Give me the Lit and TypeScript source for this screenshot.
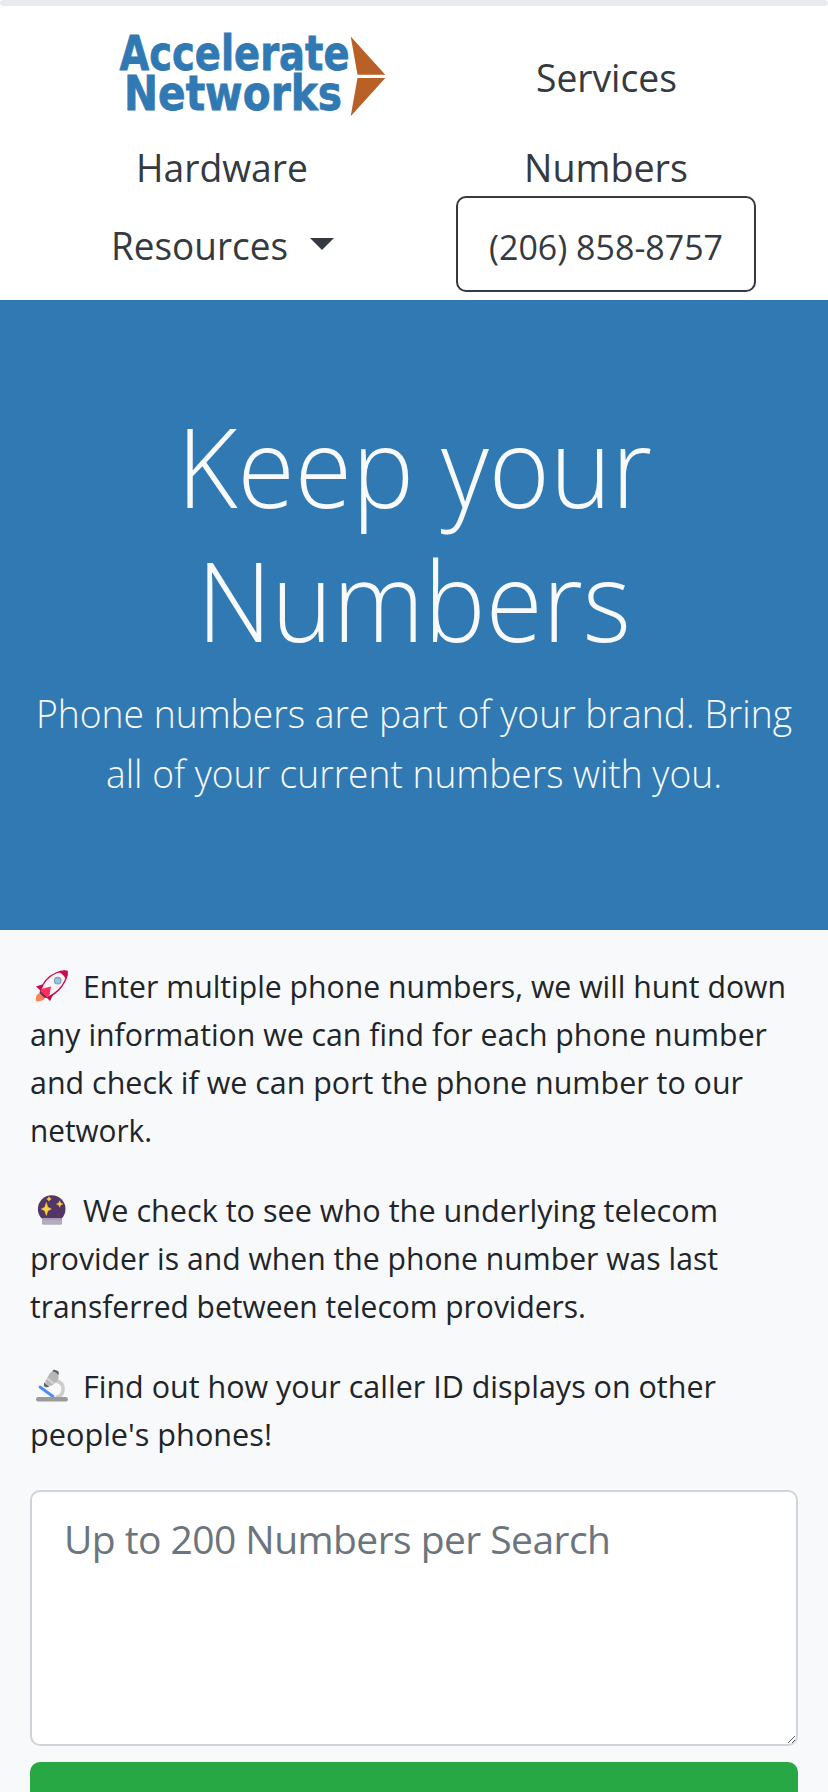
import { LitElement, html, css, svg } from "lit";
import { customElement, property, query } from "lit/decorators.js";

/** One line of text, condensed or widened so that it spans the given width. */
@customElement("fit-line")
export class FitLine extends LitElement {
  @property({ type: Number }) width = 0;
  @property() text = "";
  @query(".line") line!: HTMLElement;

  static styles = css`
    :host { display: inline-block; white-space: nowrap; text-align: left; }
    .line { display: inline-block; vertical-align: top; transform-origin: 0 0; }
  `;

  firstUpdated() {
    const natural = this.line.getBoundingClientRect().width;
    this.line.style.transform = `scaleX(${this.width / natural})`;
    this.style.width = `${this.width}px`;
  }

  render() {
    return html`<span class="line">${this.text}</span>`;
  }
}

const rocket = svg`
  <path d="M2 32 Q1 25 6 24 L11 29 Q8 33 2 32Z" fill="#ff8257"/>
  <path d="M2 17.5 L8 15.5 L13 17 L7 22Z" fill="#ca0b4a"/>
  <path d="M12 28 L18 21 L19 26 L16 32Z" fill="#ca0b4a"/>
  <path d="M6.5 22 Q10 9 22 4 Q29 1 33 2.5 Q34 8 28 17 Q22 25 13 28.5Z" fill="#f4f4f4" stroke="#ca0b4a" stroke-width="1.3"/>
  <path d="M25 3 Q30 .8 33.6 1.8 Q34.2 6 32 10.5 Q30 5.5 25 3Z" fill="#ca0b4a"/>
  <path d="M6 22 L13 28.5 L10.5 29 L5.5 24Z" fill="#533566"/>
  <path d="M7 20 L17 17.5 L15.5 26 L13 28 L6.5 22Z" fill="#f92f60"/>
  <circle cx="23.7" cy="11.7" r="3.2" fill="#83cbff" stroke="#9b9b9b" stroke-width="1.3"/>`;

const crystalBall = svg`
  <circle cx="17.7" cy="16" r="13.8" fill="#533566"/>
  <path d="M8 25 H28 V30.5 Q28 31.8 26.5 31.8 H9.5 Q8 31.8 8 30.5Z" fill="#b4acbc"/>
  <path d="M8 25 H28 V27 H8Z" fill="#a79cb0"/>
  <path d="M12.3 9.5 L13.8 14.2 L17.3 16 L13.8 17.8 L12.3 22.5 L10.8 17.8 L7.3 16 L10.8 14.2Z M25.7 7.8 L26.6 10.1 L28.9 11 L26.6 11.9 L25.7 14.2 L24.8 11.9 L22.5 11 L24.8 10.1Z M15 3.8 L15.8 5.2 L17.2 6 L15.8 6.8 L15 8.2 L14.2 6.8 L12.8 6 L14.2 5.2Z" fill="#fcd53f" stroke="#fcd53f" stroke-width=".5"/>`;

const microscope = svg`
  <path d="M22 12 Q30 13.5 29 21 Q28.5 27 22 28.5" fill="none" stroke="#cdcdcd" stroke-width="3.4"/>
  <path d="M6 18 L19 27.5" stroke="#4a8df8" stroke-width="2.8" stroke-linecap="round"/>
  <path d="M10 13.5 L15.5 17.5 L12.3 18.4 L9.8 16.9Z" fill="#636363"/>
  <path d="M19 1 Q21 0 24.5 2.5 Q25.5 4 24.2 6.5 L18 4Z" fill="#636363"/>
  <path d="M16 4 Q19 .8 23 4.5 Q25.5 7 24 11.5 L18 16.5 Q14 17.5 11.5 15 Q10.5 13 12 11Z" fill="#b7b7b7"/>
  <path d="M13 9.3 L19.8 14.7" stroke="#d6d6d6" stroke-width="2"/>
  <rect x="2" y="28" width="32" height="4.6" rx="2.3" fill="#9b9b9b"/>`;

type Line = [string, number];
const paragraphs: { icon: unknown; lines: Line[] }[] = [
  {
    icon: rocket,
    lines: [
      ["Enter multiple phone numbers, we will hunt down", 703],
      ["any information we can find for each phone number", 737],
      ["and check if we can port the phone number to our", 713],
      ["network.", 122],
    ],
  },
  {
    icon: crystalBall,
    lines: [
      ["We check to see who the underlying telecom", 635],
      ["provider is and when the phone number was last", 688],
      ["transferred between telecom providers.", 556],
    ],
  },
  {
    icon: microscope,
    lines: [
      ["Find out how your caller ID displays on other", 633],
      ["people's phones!", 242],
    ],
  },
];

@customElement("app-root")
export class AppRoot extends LitElement {
  static styles = css`
    :host {
      display: block;
      height: 1792px;
      overflow: hidden;
      background: #f8f9fa;
      color: #212529;
      font-family: "Open Sans", "Noto Sans", sans-serif;
    }
    * { box-sizing: border-box; }
    header { background: #fff; height: 300px; color: #343a40; }
    .progress { height: 6px; background: #e9ecef; border-radius: 6px; }
    nav {
      display: grid;
      grid-template-columns: 1fr 1fr;
      grid-template-rows: 120px 60px 96px;
      padding: 10px 30px 0;
      justify-items: center;
      align-items: center;
      font-size: 39px;
      line-height: 60px;
    }
    nav > fit-line, .dropdown fit-line { padding-top: 2px; }
    .logo { display: block; justify-self: start; margin-left: 86px; overflow: visible; }
    .logo-text { font: bold 47.5px "DejaVu Sans", sans-serif; fill: #3179b3; stroke: #3179b3; stroke-width: 0.8px; }
    .dropdown { display: flex; align-items: center; gap: 22px; }
    .caret {
      border: 12px solid transparent;
      border-top-color: currentColor;
      border-bottom: 0;
    }
    .phone {
      width: 300px;
      height: 96px;
      border: 2px solid #343a40;
      border-radius: 10px;
      display: flex;
      justify-content: center;
      padding-top: 19px;
      font-size: 34.5px;
    }
    .hero {
      height: 630px;
      padding-top: 98px;
      background: #3179b3;
      color: #f8f9fa;
      text-align: center;
      font-weight: 300;
    }
    h1 { margin: 0 0 16px; font-size: 110px; line-height: 134.4px; font-weight: 300; }
    .lead { font-size: 39px; line-height: 60px; }
    h1 fit-line, .lead fit-line { display: block; margin: 0 auto; }
    main { padding: 32px 30px 0; font-size: 31.4px; line-height: 48px; }
    p { margin: 0 0 32px; }
    .row { display: flex; height: 48px; }
    .icon { width: 36px; height: 34px; margin: 7px 12.5px 0 4px; flex: none; }
    .numbers {
      display: block;
      width: 100%;
      height: 256px;
      margin: 0 0 16px;
      padding: 16px 32px;
      border: 2px solid #ced4da;
      border-radius: 10px;
      background: #fff;
      font: 39px/62px "Open Sans", sans-serif;
      letter-spacing: -0.56px;
      outline: none;
    }
    .numbers::placeholder { color: #6c757d; opacity: 1; }
    .submit { display: block; width: 100%; height: 96px; border: 0; border-radius: 10px; background: #28a745; }
  `;

  render() {
    return html`
      <header>
        <div class="progress"></div>
        <nav>
          <svg class="logo" width="274" height="84" viewBox="116 33 274 84">
            <text class="logo-text" x="119.5" y="69" textLength="230" lengthAdjust="spacingAndGlyphs">Accelerate</text>
            <text class="logo-text" x="124" y="108.7" textLength="218" lengthAdjust="spacingAndGlyphs">Networks</text>
            <path d="M350.7 35.5 L385.3 73.7 H357.5Z M357.5 77 H385.3 L350.7 115.3Z" fill="#b96027" />
          </svg>
          <fit-line text="Services" width="141"></fit-line>
          <fit-line text="Hardware" width="172"></fit-line>
          <fit-line text="Numbers" width="164"></fit-line>
          <div class="dropdown">
            <fit-line text="Resources" width="177"></fit-line>
            <span class="caret"></span>
          </div>
          <div class="phone"><fit-line text="(206) 858-8757" width="234"></fit-line></div>
        </nav>
      </header>
      <section class="hero">
        <h1>
          <fit-line text="Keep your" width="475"></fit-line>
          <fit-line text="Numbers" width="434"></fit-line>
        </h1>
        <div class="lead">
          <fit-line text="Phone numbers are part of your brand. Bring" width="756"></fit-line>
          <fit-line text="all of your current numbers with you." width="616"></fit-line>
        </div>
      </section>
      <main>
        ${paragraphs.map(
          (p) => html`<p>
            ${p.lines.map(
              ([text, width], i) => html`<span class="row">
                ${i === 0 ? html`<svg class="icon" viewBox="0 0 36 34">${p.icon}</svg>` : ""}
                <fit-line text=${text} width=${width}></fit-line>
              </span>`
            )}
          </p>`
        )}
        <textarea class="numbers" placeholder="Up to 200 Numbers per Search"></textarea>
        <button class="submit"></button>
      </main>
    `;
  }
}
